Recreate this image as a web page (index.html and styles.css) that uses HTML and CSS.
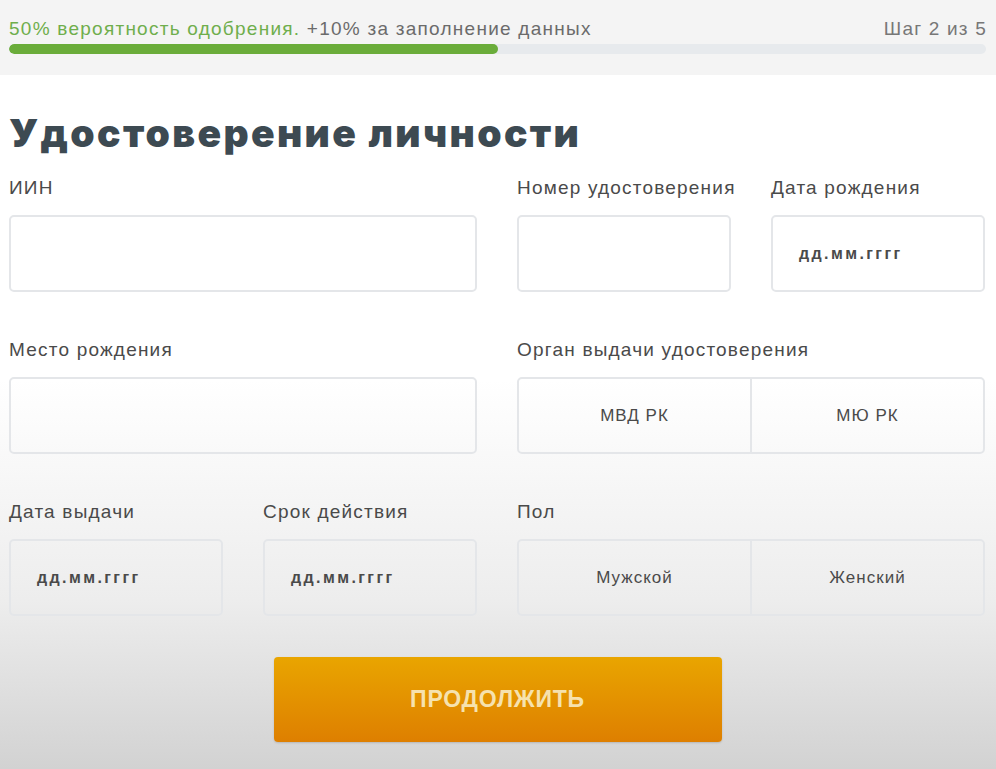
FILE: index.html
```html
<!DOCTYPE html>
<html lang="ru">
<head>
<meta charset="utf-8">
<title>Удостоверение личности</title>
<link rel="stylesheet" href="styles.css">
</head>
<body>
<header class="topbar">
  <div class="topbar-row">
    <span class="chance"><span class="chance-green">50% вероятность одобрения.</span> +10% за заполнение данных</span>
    <span class="step">Шаг 2 из 5</span>
  </div>
  <div class="progress"><div class="progress-fill" style="width:50%"></div></div>
</header>
<main class="page">
  <h1 class="title">Удостоверение личности</h1>
  <div class="grid">
    <div class="field span2">
      <label class="label">ИИН</label>
      <div class="input"></div>
    </div>
    <div class="field">
      <label class="label">Номер удостоверения</label>
      <div class="input"></div>
    </div>
    <div class="field">
      <label class="label">Дата рождения</label>
      <div class="input"><span class="ph">дд.мм.гггг</span></div>
    </div>

    <div class="field span2">
      <label class="label">Место рождения</label>
      <div class="input"></div>
    </div>
    <div class="field span2">
      <label class="label">Орган выдачи удостоверения</label>
      <div class="segment">
        <div class="seg">МВД РК</div>
        <div class="seg">МЮ РК</div>
      </div>
    </div>

    <div class="field">
      <label class="label">Дата выдачи</label>
      <div class="input"><span class="ph">дд.мм.гггг</span></div>
    </div>
    <div class="field">
      <label class="label">Срок действия</label>
      <div class="input"><span class="ph">дд.мм.гггг</span></div>
    </div>
    <div class="field span2">
      <label class="label">Пол</label>
      <div class="segment">
        <div class="seg">Мужской</div>
        <div class="seg">Женский</div>
      </div>
    </div>
  </div>
  <div class="actions">
    <button class="btn">ПРОДОЛЖИТЬ</button>
  </div>
</main>
</body>
</html>
```
FILE: styles.css
```css
* { box-sizing: border-box; }
html, body { margin: 0; padding: 0; }
body {
  width: 996px;
  height: 769px;
  overflow: hidden;
  font-family: "Liberation Sans", Arial, sans-serif;
  background: linear-gradient(to bottom, #ffffff 0px, #ffffff 380px, #ededed 600px, #d2d2d2 769px);
  color: #444;
}
.topbar {
  background: #f4f4f4;
  height: 75px;
  padding: 18px 10px 0 9px;
}
.topbar-row {
  display: flex;
  justify-content: space-between;
  align-items: baseline;
  font-size: 19px;
  line-height: 22px;
  letter-spacing: 1.25px;
  color: #6b6b6b;
}
.chance { white-space: nowrap; }
.chance-green { color: #6fae4c; }
.step { color: #777; letter-spacing: 1.2px; margin-right: -1px; }
.progress {
  margin-top: 4px;
  height: 10px;
  background: #e7eaed;
  border-radius: 5px;
  overflow: hidden;
}
.progress-fill {
  height: 100%;
  background: #6aac3a;
  border-radius: 5px;
}
.page {
  padding: 0 10px 0 9px;
}
.title {
  margin: 0;
  padding-top: 34px;
  font-family: Inter, "Liberation Sans", sans-serif;
  font-weight: 900;
  font-size: 39px;
  line-height: 48px;
  color: #3d4a52;
  letter-spacing: 2.35px;
  white-space: nowrap;
}
.grid {
  display: grid;
  grid-template-columns: repeat(4, 214px);
  column-gap: 40px;
  row-gap: 48px;
  margin-top: 21px;
}
.field { display: flex; flex-direction: column; }
.span2 { grid-column: span 2; }
.label {
  font-size: 19px;
  line-height: 20px;
  letter-spacing: 1.2px;
  color: #4a4a4a;
  margin-bottom: 17px;
  white-space: nowrap;
}
.input {
  height: 77px;
  border: 2px solid #e4e6e9;
  border-radius: 5px;
  display: flex;
  align-items: center;
  padding-left: 26px;
}
.ph {
  font-size: 16px;
  font-weight: bold;
  letter-spacing: 2.4px;
  color: #4a4a4a;
}
.segment {
  height: 77px;
  border: 2px solid #e4e6e9;
  border-radius: 5px;
  display: flex;
}
.seg {
  flex: 1;
  display: flex;
  align-items: center;
  justify-content: center;
  font-size: 17px;
  letter-spacing: 1px;
  color: #4a4a4a;
}
.seg + .seg { border-left: 2px solid #e4e6e9; }
.actions {
  display: flex;
  justify-content: center;
  margin-top: 41px;
}
.btn {
  width: 448px;
  height: 85px;
  border: none;
  border-radius: 4px;
  background: linear-gradient(to bottom, #e9a500, #de7f00);
  color: #f6e2ae;
  font-family: "Liberation Sans", Arial, sans-serif;
  font-weight: bold;
  font-size: 23px;
  letter-spacing: 0.8px;
  box-shadow: 0 1px 2px rgba(0,0,0,0.15);
}
```
